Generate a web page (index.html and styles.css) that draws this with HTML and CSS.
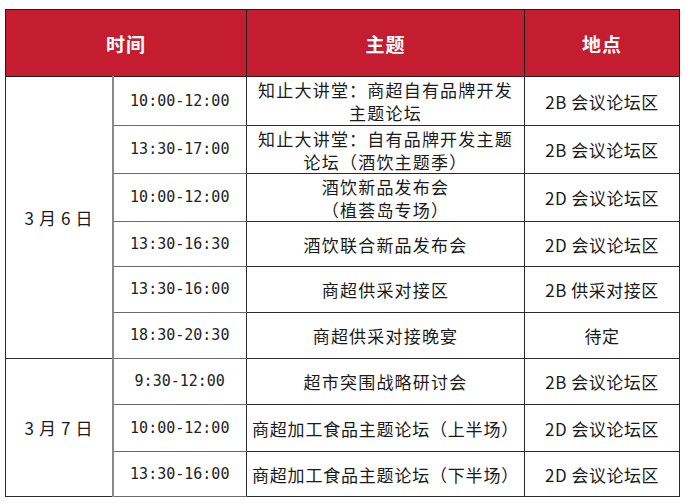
FILE: index.html
```html
<!DOCTYPE html>
<html lang="zh-CN">
<head>
<meta charset="utf-8">
<link rel="stylesheet" href="styles.css">
</head>
<body>
<table class="schedule">
  <colgroup>
    <col class="c-date"><col class="c-time"><col class="c-topic"><col class="c-place">
  </colgroup>
  <thead>
    <tr><th colspan="2">时间</th><th>主题</th><th>地点</th></tr>
  </thead>
  <tbody>
    <tr class="r49">
      <td class="date" rowspan="6">3 月 6 日</td>
      <td class="time">10:00-12:00</td>
      <td class="topic">知止大讲堂：商超自有品牌开发<br>主题论坛</td>
      <td class="place">2B 会议论坛区</td>
    </tr>
    <tr class="r48">
      <td class="time">13:30-17:00</td>
      <td class="topic">知止大讲堂：自有品牌开发主题<br>论坛（酒饮主题季）</td>
      <td class="place">2B 会议论坛区</td>
    </tr>
    <tr class="r48">
      <td class="time">10:00-12:00</td>
      <td class="topic">酒饮新品发布会<br>（植荟岛专场）</td>
      <td class="place">2D 会议论坛区</td>
    </tr>
    <tr class="r45">
      <td class="time">13:30-16:30</td>
      <td class="topic">酒饮联合新品发布会</td>
      <td class="place">2D 会议论坛区</td>
    </tr>
    <tr class="r46">
      <td class="time">13:30-16:00</td>
      <td class="topic">商超供采对接区</td>
      <td class="place">2B 供采对接区</td>
    </tr>
    <tr class="r46">
      <td class="time">18:30-20:30</td>
      <td class="topic">商超供采对接晚宴</td>
      <td class="place">待定</td>
    </tr>
    <tr class="r46">
      <td class="date" rowspan="3">3 月 7 日</td>
      <td class="time">9:30-12:00</td>
      <td class="topic">超市突围战略研讨会</td>
      <td class="place">2B 会议论坛区</td>
    </tr>
    <tr class="r47">
      <td class="time">10:00-12:00</td>
      <td class="topic tight">商超加工食品主题论坛（上半场）</td>
      <td class="place">2D 会议论坛区</td>
    </tr>
    <tr class="r45">
      <td class="time">13:30-16:00</td>
      <td class="topic tight">商超加工食品主题论坛（下半场）</td>
      <td class="place">2D 会议论坛区</td>
    </tr>
  </tbody>
</table>
</body>
</html>
```
FILE: styles.css
```css
html, body {
  margin: 0;
  padding: 0;
  background: #ffffff;
}
body {
  padding: 9px 0 0 5px;
  font-family: "Noto Sans CJK SC", "Noto Sans", sans-serif;
  color: #1a1a1a;
}
.schedule {
  border-collapse: collapse;
  table-layout: fixed;
  width: 674px;
}
.c-date { width: 107px; }
.c-time { width: 134px; }
.c-topic { width: 278px; }
.c-place { width: 155px; }

.schedule th {
  background: #c41d30;
  color: #ffffff;
  font-size: 19px;
  font-weight: 700;
  letter-spacing: 1px;
  height: 66px;
  padding: 0;
  border: 1px solid #2a1a1a;
  text-align: center;
  vertical-align: middle;
}
.schedule td {
  border: 1px solid #2b2b2b;
  padding: 0;
  text-align: center;
  vertical-align: middle;
  font-size: 17px;
  line-height: 23px;
  letter-spacing: 1px;
}
.r49 { height: 49px; }
.r48 { height: 48px; }
.r47 { height: 47px; }
.r46 { height: 46px; }
.r45 { height: 45px; }

.schedule td.date {
  font-size: 17px;
  letter-spacing: 0.6px;
}
.schedule td.time {
  font-family: "DejaVu Sans Mono", "Liberation Mono", monospace;
  font-size: 15px;
  letter-spacing: 0;
  color: #222;
  border-left: 2px solid #8a8a8a;
  border-top-color: #6a6a6a;
  border-bottom-color: #6a6a6a;
}
.schedule td.topic {
  letter-spacing: 1.2px;
}
.schedule td.topic.tight {
  letter-spacing: 0.8px;
}
.schedule td.place {
  letter-spacing: 0.5px;
}
```
